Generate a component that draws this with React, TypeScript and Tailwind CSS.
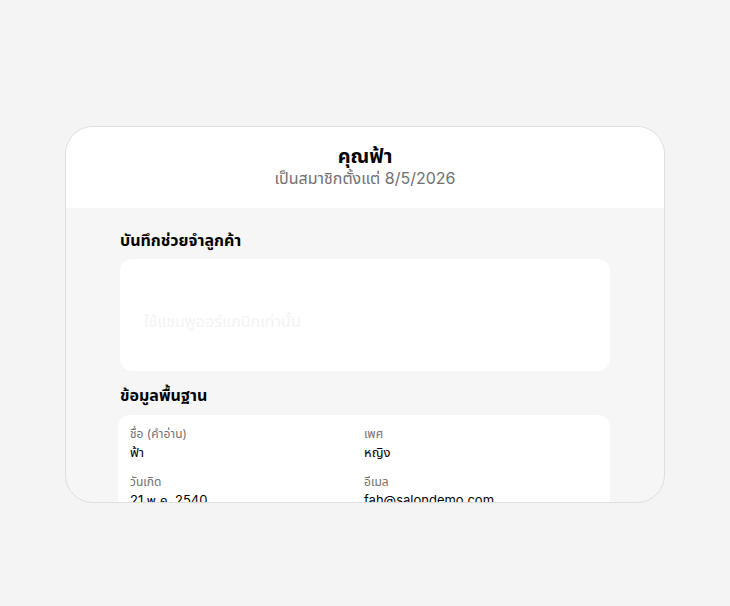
type Field = {
  label: string;
  value: string;
};

const fields: Field[] = [
  { label: "ชื่อ (คำอ่าน)", value: "ฟ้า" },
  { label: "เพศ", value: "หญิง" },
  { label: "วันเกิด", value: "21 พ.ค. 2540" },
  { label: "อีเมล", value: "fah@salondemo.com" },
];

export default function App() {
  return (
    <div className="flex min-h-[606px] justify-center bg-[#f4f4f4] pt-[126px] font-['Inter','Noto_Sans_Thai','Noto_Sans',sans-serif]">
      <div className="flex h-[377px] w-[600px] flex-col overflow-hidden rounded-[28px] border border-[#dedede] bg-[#f6f6f6]">
        <div className="bg-white pb-5 pt-[17px] text-center">
          <div className="text-xl font-bold leading-6 text-black">คุณฟ้า</div>
          <div className="text-base leading-5 text-[#707070]">เป็นสมาชิกตั้งแต่ 8/5/2026</div>
        </div>

        <div className="mx-auto w-[490px] pt-5">
          <h2 className="text-base font-bold leading-6 text-black">บันทึกช่วยจำลูกค้า</h2>
          <div className="mt-[7px] h-[112px] rounded-xl bg-white px-6 pt-[52px]">
            <p className="text-base leading-5 text-[#f3f3f3]">ใช้แชมพูออร์แกนิกเท่านั้น</p>
          </div>

          <h2 className="mt-3 text-base font-bold leading-6 text-black">ข้อมูลพื้นฐาน</h2>
          <div className="-ml-[2px] mt-2 grid grid-cols-2 gap-y-3 rounded-xl bg-white px-3 pt-[11px]">
            {fields.map((f) => (
              <div key={f.label}>
                <div className="text-xs leading-4 text-[#707070]">{f.label}</div>
                <div className="text-[13px] leading-5 text-black">{f.value}</div>
              </div>
            ))}
          </div>
        </div>
      </div>
    </div>
  );
}
